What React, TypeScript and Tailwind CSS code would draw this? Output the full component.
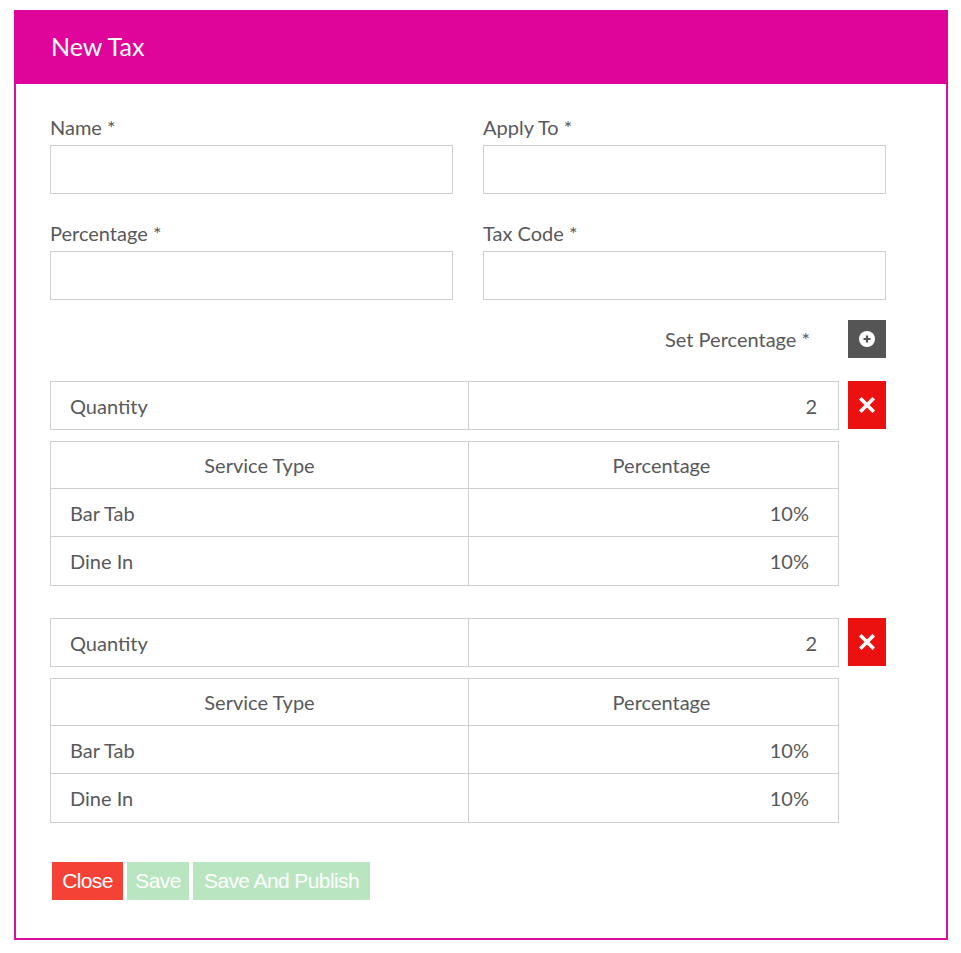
import React from "react";

const font = { fontFamily: "Lato, 'Noto Sans', sans-serif" };

function Field({ label }: { label: string }) {
  return (
    <div className="flex flex-col">
      <label className="h-[24px] leading-[24px] text-[20px] text-[#58595b] mb-[6px]">{label}</label>
      <input className="h-[49px] w-full border border-[#cfcfcf] bg-white outline-none" />
    </div>
  );
}

function PlusIcon() {
  return (
    <svg width="16" height="16" viewBox="0 0 16 16">
      <circle cx="8" cy="8" r="8" fill="#ffffff" />
      <path d="M8 4.5v7M4.5 8h7" stroke="#555555" strokeWidth="2.2" />
    </svg>
  );
}

function XIcon() {
  return (
    <svg width="16" height="16" viewBox="0 0 16 16">
      <path d="M2.5 2.5l11 11M13.5 2.5l-11 11" stroke="#ffffff" strokeWidth="3.6" strokeLinecap="square" />
    </svg>
  );
}

function PercentBlock() {
  const rows = [
    { type: "Bar Tab", pct: "10%" },
    { type: "Dine In", pct: "10%" },
  ];
  return (
    <div className="flex flex-col">
      <div className="flex gap-[9px]">
        <div className="flex w-[789px] h-[49px] border border-[#cfcfcf] text-[20px] text-[#58595b]">
          <div className="w-[418px] border-r border-[#cfcfcf] flex items-center pl-[19px]">Quantity</div>
          <div className="flex-1 flex items-center justify-end pr-[21px]">2</div>
        </div>
        <button className="w-[38px] h-[48px] bg-[#ec1111] flex items-center justify-center">
          <XIcon />
        </button>
      </div>
      <div className="mt-[11px] w-[789px] border border-[#cfcfcf] text-[20px] text-[#58595b]">
        <div className="flex h-[47px] border-b border-[#cfcfcf]">
          <div className="w-[418px] border-r border-[#cfcfcf] flex items-center justify-center">Service Type</div>
          <div className="flex-1 flex items-center justify-center pl-[16px]">Percentage</div>
        </div>
        {rows.map((r, i) => (
          <div key={i} className={`flex h-[48px] ${i === 0 ? "border-b border-[#cfcfcf]" : ""}`}>
            <div className="w-[418px] border-r border-[#cfcfcf] flex items-center pl-[19px]">{r.type}</div>
            <div className="flex-1 flex items-center justify-end pr-[29px]">{r.pct}</div>
          </div>
        ))}
      </div>
    </div>
  );
}

export default function App() {
  return (
    <div className="bg-white w-[961px] h-[953px] pt-[10px] pl-[14px]" style={font}>
      <div className="w-[934px] flex flex-col">
        <div className="h-[74px] bg-[#e0059a] flex items-center pl-[37px] text-white text-[25px]">New Tax</div>
        <div className="border-2 border-t-0 border-[#d9109e] pt-[31px] pl-[34px] pr-[60px] pb-[38px] h-[856px]">
          <div className="grid grid-cols-2 gap-x-[30px] gap-y-[27px]">
            <Field label="Name *" />
            <Field label="Apply To *" />
            <Field label="Percentage *" />
            <Field label="Tax Code *" />
          </div>
          <div className="mt-[20px] flex items-center justify-end gap-[38px]">
            <span className="text-[20px] text-[#58595b]">Set Percentage *</span>
            <button className="w-[38px] h-[38px] bg-[#555555] flex items-center justify-center">
              <PlusIcon />
            </button>
          </div>
          <div className="mt-[23px] flex flex-col gap-[32px]">
            <PercentBlock />
            <PercentBlock />
          </div>
          <div
            className="mt-[39px] ml-[2px] flex gap-[4px] text-white text-[21px] tracking-[-0.6px]"
            style={{ fontFamily: "'Liberation Sans', Arial, sans-serif" }}
          >
            <button className="w-[71px] h-[38px] bg-[#f44336]">Close</button>
            <button className="w-[62px] h-[38px] bg-[#b9e6c0]">Save</button>
            <button className="w-[177px] h-[38px] bg-[#b9e6c0]">Save And Publish</button>
          </div>
        </div>
      </div>
    </div>
  );
}
